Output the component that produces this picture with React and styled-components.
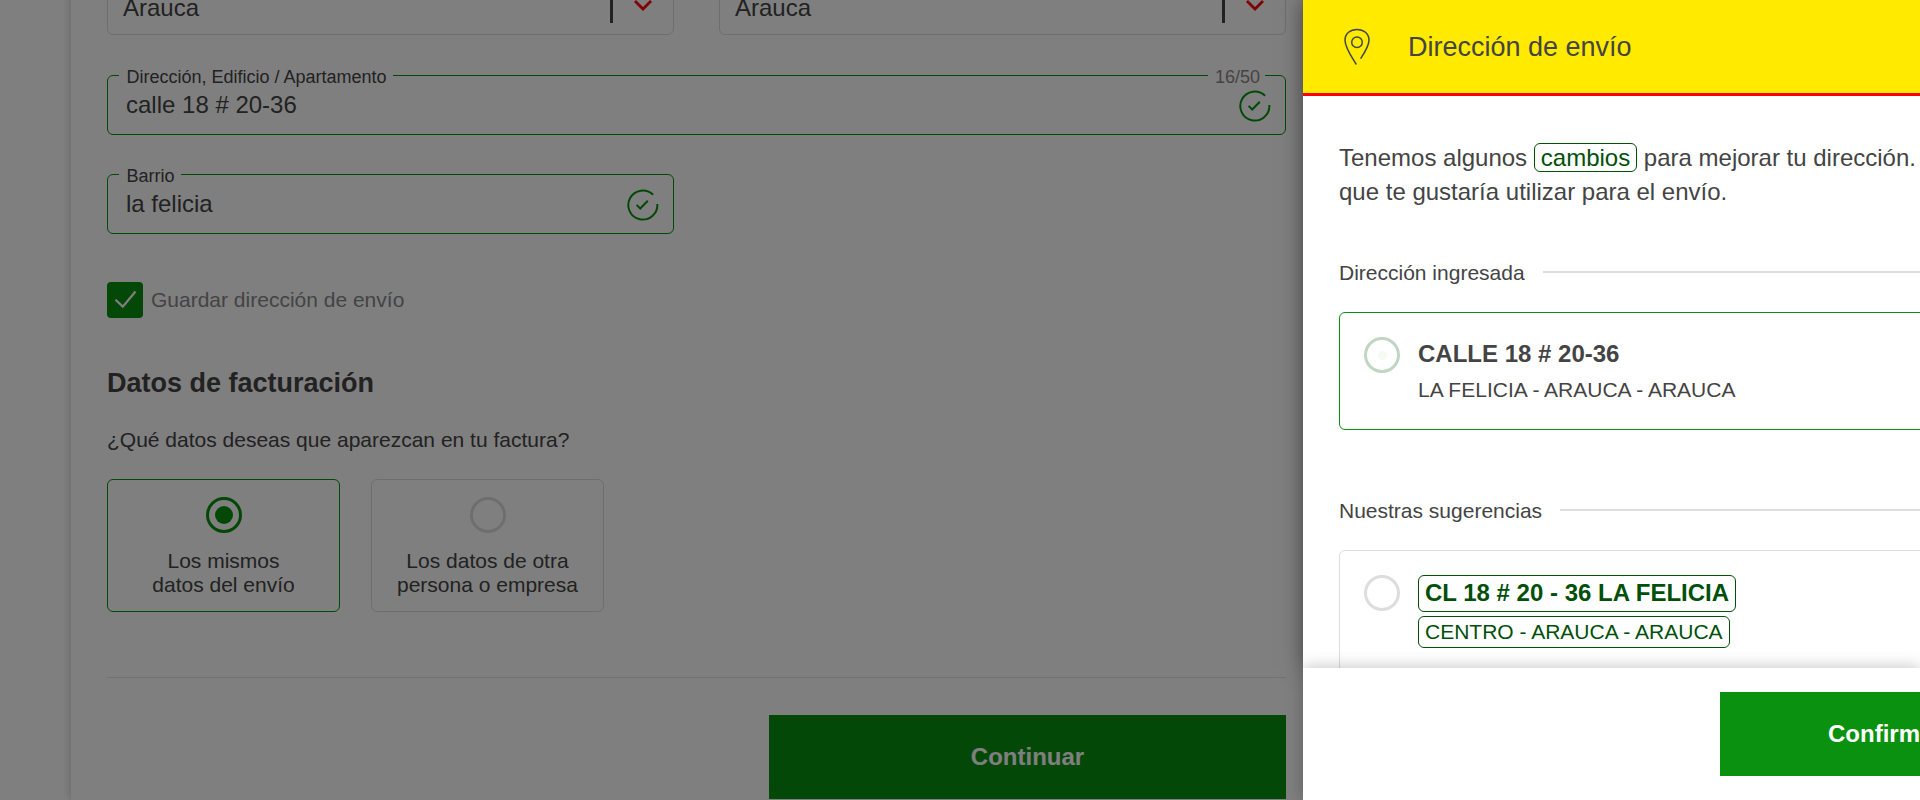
import React from 'react';
import styled, { createGlobalStyle } from 'styled-components';

const GREEN = '#09910f';
const DARK_GREEN = '#00500a';

const GlobalStyle = createGlobalStyle`
  *, *::before, *::after { box-sizing: border-box; }
  body {
    margin: 0;
    background: #fff;
    color: #444;
    font-family: "Liberation Sans", Arial, sans-serif;
    font-size: 21px;
    line-height: 24px;
  }
  h1, h2, h3, p { margin: 0; font-weight: normal; }
`;

const Page = styled.div`
  position: relative;
  width: 1920px;
  height: 800px;
  overflow: hidden;
`;

const Checkout = styled.main`
  height: 825px;
  width: 1251px;
  margin: -25px 0 0 71px;
  padding: 0 36px;
  background: #fff;
  box-shadow: 0 0 9px rgba(0, 0, 0, 0.22);
`;

const FieldRow = styled.div`
  display: grid;
  grid-template-columns: 567px 567px;
  justify-content: space-between;
  margin-bottom: ${(p) => p.$gap}px;
`;

const Select = styled.div`
  display: flex;
  align-items: center;
  height: 60px;
  padding: 0 20px 0 15px;
  border: 1px solid #ddd;
  border-radius: 6px;
  font-size: 24px;
`;

const SelectValue = styled.span`
  flex: 1;
  padding-top: 5px;
  line-height: 28px;
  color: #444;
`;

const SelectBar = styled.span`
  width: 3px;
  height: 36px;
  margin-right: 20px;
  background: #444;
`;

const Field = styled.div`
  position: relative;
  display: flex;
  justify-content: space-between;
  height: 60px;
  padding: 14px 14px 0 18px;
  margin-bottom: ${(p) => p.$gap || 0}px;
  border: 1px solid ${GREEN};
  border-radius: 6px;
`;

const FieldLabel = styled.span`
  position: absolute;
  top: -10px;
  ${(p) => (p.$end ? 'right: 20px; color: #888; padding: 0 5px 0 7px;' : 'left: 11px; color: #444; padding: 0 6.5px 0 7.5px;')}
  background: #fff;
  font-size: 18px;
  line-height: 22px;
`;

const FieldValue = styled.span`
  padding-top: 1px;
  font-size: 24px;
  line-height: 28px;
  color: #444;
`;

const SaveRow = styled.label`
  display: flex;
  align-items: center;
  gap: 8px;
  margin-bottom: 49px;
  color: #888;
`;

const Checkbox = styled.span`
  display: flex;
  width: 36px;
  height: 36px;
  border-radius: 4px;
  background: ${GREEN};
`;

const SectionHeading = styled.h2`
  margin-bottom: 29px;
  font-size: 27px;
  font-weight: bold;
  line-height: 32px;
`;

const Options = styled.div`
  display: flex;
  gap: 31px;
  margin: 27px 0 65px;
`;

const Option = styled.div`
  display: flex;
  flex-direction: column;
  align-items: center;
  gap: 16px;
  width: 233px;
  height: 133px;
  padding-top: 17px;
  border: 1px solid ${(p) => (p.$selected ? GREEN : '#ddd')};
  border-radius: 6px;
  text-align: center;
`;

const Radio = styled.span`
  display: flex;
  align-items: center;
  justify-content: center;
  flex: none;
  width: 36px;
  height: 36px;
  border: 3px solid ${(p) => p.$ring || '#ddd'};
  border-radius: 50%;
  &::after {
    content: "";
    width: ${(p) => p.$dotSize || 0}px;
    height: ${(p) => p.$dotSize || 0}px;
    border-radius: 50%;
    background: ${(p) => p.$dot || 'transparent'};
  }
`;

const Divider = styled.hr`
  height: 1px;
  margin: 0 0 37px;
  border: 0;
  background: #e4e4e4;
`;

const Button = styled.button`
  display: flex;
  align-items: center;
  justify-content: ${(p) => (p.$start ? 'flex-start' : 'center')};
  flex: none;
  width: 517px;
  height: 84px;
  margin-left: auto;
  padding: 0 ${(p) => (p.$start ? 108 : 0)}px;
  border: 0;
  background: ${GREEN};
  color: #fff;
  font: bold 24px/28px "Liberation Sans", Arial, sans-serif;
`;

const Backdrop = styled.div`
  position: absolute;
  inset: 0;
  background: rgba(0, 0, 0, 0.5);
`;

const Drawer = styled.aside`
  position: absolute;
  inset: 0 0 0 1303px;
  display: flex;
  flex-direction: column;
`;

const DrawerTop = styled.div`
  flex: none;
  height: 668px;
  background: #fff;
  box-shadow: 0 0 20px rgba(0, 0, 0, 0.5);
`;

const DrawerHeader = styled.header`
  display: flex;
  align-items: center;
  gap: 36px;
  height: 96px;
  padding-left: 41px;
  border-bottom: 3px solid #f00;
  background: #ffea00;
`;

const DrawerTitle = styled.h1`
  font-size: 27px;
  line-height: 32px;
`;

const DrawerBody = styled.div`
  height: 572px;
  padding: 45px 0 0 36px;
  overflow: hidden;
`;

const Intro = styled.p`
  height: 68px;
  margin-bottom: 52px;
  font-size: 24px;
  line-height: 34px;
  white-space: nowrap;
`;

const Tag = styled.span`
  display: inline-block;
  padding: 0 6px ${(p) => p.$lift || 0}px;
  border: 1px solid ${DARK_GREEN};
  border-radius: 6px;
  color: ${DARK_GREEN};
  line-height: ${(p) => p.$line}px;
`;

const GroupTitle = styled.h3`
  display: flex;
  align-items: center;
  gap: 18px;
  margin-bottom: 27px;
  font-size: 21px;
  &::after {
    content: "";
    flex: 1;
    height: 2px;
    margin-top: -2px;
    background: #ddd;
  }
`;

const AddressCard = styled.div`
  display: flex;
  align-items: flex-start;
  gap: 18px;
  width: 640px;
  height: ${(p) => (p.$selected ? 118 : 126)}px;
  padding: 24px;
  margin-bottom: 69px;
  border: 1px solid ${(p) => (p.$selected ? GREEN : '#ddd')};
  border-radius: 6px;
`;

const AddressLines = styled.div`
  display: flex;
  flex-direction: column;
  align-items: flex-start;
  gap: ${(p) => p.$gap}px;
  padding-top: ${(p) => p.$offset || 0}px;
`;

const Street = styled.strong`
  display: flex;
  font-size: 24px;
  line-height: 28px;
`;

const DrawerFooter = styled.footer`
  display: flex;
  flex: none;
  height: 132px;
  padding: 24px 0 0 417px;
  background: #fff;
  box-shadow: 0 0 16px rgba(0, 0, 0, 0.26);
  overflow: hidden;
`;

const ChevronIcon = () => (
  <svg width="20" height="20" viewBox="0 0 20 20" fill="none" stroke="#f00" strokeWidth="2.8">
    <path d="M2 6 10 14 18 6" />
  </svg>
);

const ValidIcon = () => (
  <svg width="32" height="32" viewBox="0 0 32 32" fill="none" stroke={GREEN} strokeWidth="2">
    <path d="M26.1 5.8A14.5 14.5 0 1 0 30.3 15" />
    <path d="M9.6 15.9 13.2 19.5 20.8 11.7" />
  </svg>
);

const CheckIcon = () => (
  <svg width="36" height="36" viewBox="0 0 36 36" fill="none" stroke="#fff" strokeWidth="2.2">
    <path d="M8.5 17.8 15.8 24.6 28.5 9.5" />
  </svg>
);

const PinIcon = () => (
  <svg width="28" height="38" viewBox="0 0 28 38" fill="none" stroke="#444" strokeWidth="1.5">
    <path d="M12.3 36.5C7 28 1 19.5 1 12.3 1 5.5 6.4 1.4 13 1.4S25 5.5 25 12.3C25 18 21 24 16.6 30.7" />
    <circle cx="13" cy="14.2" r="5.3" />
  </svg>
);

const Department = () => (
  <Select>
    <SelectValue>Arauca</SelectValue>
    <SelectBar />
    <ChevronIcon />
  </Select>
);

export default function App() {
  return (
    <>
      <GlobalStyle />
      <Page>
        <Checkout>
          <FieldRow $gap={40}>
            <Department />
            <Department />
          </FieldRow>
          <Field $gap={39}>
            <FieldLabel>Dirección, Edificio / Apartamento</FieldLabel>
            <FieldLabel $end>16/50</FieldLabel>
            <FieldValue>calle 18 # 20-36</FieldValue>
            <ValidIcon />
          </Field>
          <FieldRow $gap={48}>
            <Field>
              <FieldLabel>Barrio</FieldLabel>
              <FieldValue>la felicia</FieldValue>
              <ValidIcon />
            </Field>
          </FieldRow>
          <SaveRow>
            <Checkbox><CheckIcon /></Checkbox>
            Guardar dirección de envío
          </SaveRow>
          <SectionHeading>Datos de facturación</SectionHeading>
          <p>¿Qué datos deseas que aparezcan en tu factura?</p>
          <Options>
            <Option $selected>
              <Radio $ring={GREEN} $dot={GREEN} $dotSize={18} />
              <span>Los mismos<br />datos del envío</span>
            </Option>
            <Option>
              <Radio />
              <span>Los datos de otra<br />persona o empresa</span>
            </Option>
          </Options>
          <Divider />
          <Button>Continuar</Button>
        </Checkout>
        <Backdrop />
        <Drawer>
          <DrawerTop>
            <DrawerHeader>
              <PinIcon />
              <DrawerTitle>Dirección de envío</DrawerTitle>
            </DrawerHeader>
            <DrawerBody>
              <Intro>
                Tenemos algunos <Tag $line={27}>cambios</Tag> para mejorar tu dirección.
                <br />
                que te gustaría utilizar para el envío.
              </Intro>
              <GroupTitle>Dirección ingresada</GroupTitle>
              <AddressCard $selected>
                <Radio $ring="#c1d6c2" $dot="#f3fbf3" $dotSize={9} />
                <AddressLines $gap={10} $offset={3}>
                  <Street>CALLE 18 # 20-36</Street>
                  <span>LA FELICIA - ARAUCA - ARAUCA</span>
                </AddressLines>
              </AddressCard>
              <GroupTitle>Nuestras sugerencias</GroupTitle>
              <AddressCard>
                <Radio />
                <AddressLines $gap={4}>
                  <Street><Tag $line={33} $lift={2}>CL 18 # 20 - 36 LA FELICIA</Tag></Street>
                  <Tag $line={30}>CENTRO - ARAUCA - ARAUCA</Tag>
                </AddressLines>
              </AddressCard>
            </DrawerBody>
          </DrawerTop>
          <DrawerFooter>
            <Button $start>Confirm</Button>
          </DrawerFooter>
        </Drawer>
      </Page>
    </>
  );
}
